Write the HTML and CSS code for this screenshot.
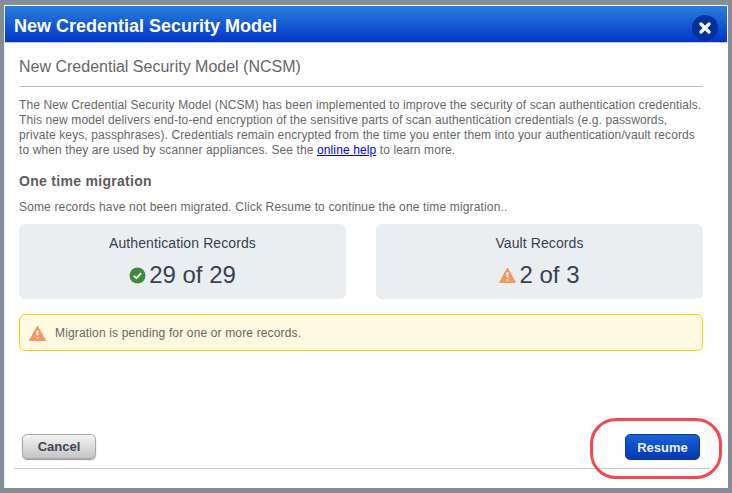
FILE: index.html
```html
<!DOCTYPE html>
<html lang="en">
<head>
<meta charset="utf-8">
<title>New Credential Security Model</title>
<link rel="stylesheet" href="styles.css">
</head>
<body>
<div class="frame">
  <div class="dialog">
    <header class="titlebar">
      <h1 class="title">New Credential Security Model</h1>
      <button class="close" aria-label="Close">
        <svg width="12" height="12" viewBox="0 0 12 12"><path d="M2 2 10 10M10 2 2 10" stroke="#fff" stroke-width="3.2" stroke-linecap="round"/></svg>
      </button>
    </header>
    <main class="content">
      <h2 class="subtitle">New Credential Security Model (NCSM)</h2>
      <p class="intro">The New Credential Security Model (NCSM) has been implemented to improve the security of scan authentication credentials.<br>This new model delivers end-to-end encryption of the sensitive parts of scan authentication credentials (e.g. passwords,<br>private keys, passphrases). Credentials remain encrypted from the time you enter them into your authentication/vault records<br>to when they are used by scanner appliances. See the <a href="#" class="link">online help</a> to learn more.</p>
      <h3 class="section">One time migration</h3>
      <p class="note">Some records have not been migrated. Click Resume to continue the one time migration..</p>
      <div class="cards">
        <section class="card">
          <div class="card-label">Authentication Records</div>
          <div class="card-value">
            <svg class="ic" width="17" height="17" viewBox="0 0 17 17"><circle cx="8.5" cy="8.5" r="8" fill="#3f8a3f"/><path d="M4.8 8.8 7.3 11.2 12.2 6.2" fill="none" stroke="#fff" stroke-width="1.8"/></svg>
            <span>29 of 29</span>
          </div>
        </section>
        <section class="card">
          <div class="card-label">Vault Records</div>
          <div class="card-value">
            <svg class="ic" width="17" height="16" viewBox="0 0 17 16"><path d="M8.5 1 16.5 15.5H.5Z" fill="#f09a62" stroke="#f09a62" stroke-linejoin="round"/><path d="M8.5 5.5V10.5M8.5 12V13.6" stroke="#fff" stroke-width="1.8"/></svg>
            <span>2 of 3</span>
          </div>
        </section>
      </div>
      <div class="alert">
        <svg class="alert-ic" width="17" height="16" viewBox="0 0 17 16"><path d="M8.5 1 16.5 15.5H.5Z" fill="#f09a62" stroke="#f09a62" stroke-linejoin="round"/><path d="M8.5 5.5V10.5M8.5 12V13.6" stroke="#fff" stroke-width="1.8"/></svg>
        <span>Migration is pending for one or more records.</span>
      </div>
    </main>
    <footer class="footer">
      <button class="btn btn-cancel">Cancel</button>
      <button class="btn btn-resume">Resume</button>
    </footer>
  </div>
  <div class="callout"></div>
</div>
</body>
</html>
```

FILE: styles.css
```css
* { box-sizing: border-box; }
html, body { margin: 0; padding: 0; }
body { width: 732px; height: 493px; overflow: hidden; font-family: "Liberation Sans", Arial, sans-serif; background: #fff; }
.frame { position: relative; width: 732px; height: 493px; padding: 5px 4px 5px 4px; background: #858d97; }
.dialog { display: flex; flex-direction: column; height: 100%; background: #fff; border: 1px solid #fff; border-bottom: 0; border-left: 1px solid #e6eef8; }
.titlebar { display: flex; align-items: center; justify-content: space-between; flex: none; height: 37px; padding: 3px 9px 0 9px; background: linear-gradient(#2a7fde, #0036c6); border-bottom: 1px solid #c5c8cc; }
.title { margin: 0; font-size: 18px; font-weight: 700; line-height: 22px; color: #fff; }
.close { display: flex; align-items: center; justify-content: center; width: 26px; height: 26px; margin-top: 5px; padding: 0; border: 0; border-radius: 50%; background: #02309f; }
.content { flex: 1; padding: 0 24px 0 14px; color: #666; }
.subtitle { margin: 0; height: 44px; padding-top: 14px; font-size: 16px; font-weight: 400; line-height: 20px; color: #666; border-bottom: 1px solid #bdbdbd; }
.intro { margin: 11px 0 0; font-size: 12px; line-height: 15px; letter-spacing: 0.11px; color: #666; white-space: nowrap; }
.link { color: #00e; text-decoration: underline; }
.section { margin: 15px 0 0; font-size: 14px; font-weight: 700; line-height: 16px; letter-spacing: 0.3px; color: #5c5c5c; }
.note { margin: 11px 0 0; font-size: 12px; line-height: 15px; letter-spacing: 0.15px; color: #666; }
.cards { display: flex; gap: 30px; margin-top: 9px; }
.card { flex: 1; height: 75px; padding-top: 11px; border-radius: 6px; background: #ebeef1; text-align: center; color: #37424e; }
.card-label { font-size: 14px; line-height: 17px; letter-spacing: 0.1px; }
.card-value { display: flex; align-items: center; justify-content: center; gap: 3px; margin-top: 9px; font-size: 24px; line-height: 28px; }
.ic { flex: none; }
.alert { display: flex; align-items: center; gap: 9px; height: 37px; margin-top: 15px; padding-left: 9px; border: 1px solid #f2d010; border-radius: 6px; background: #fef9e0; font-size: 12px; letter-spacing: 0.15px; color: #666; }
.alert-ic { flex: none; }
.footer { position: relative; display: flex; align-items: flex-start; justify-content: space-between; flex: none; height: 55px; margin: 0 18px 0 9px; padding: 1px 9px 0 8px; }
.footer::after { content: ""; position: absolute; left: 0; right: 0; top: 35px; height: 1px; background: #c4c4c4; }
.btn { padding: 0; border-radius: 5px; font-family: inherit; font-size: 13px; font-weight: 700; }
.btn-cancel { width: 74px; height: 25px; border: 1px solid #a9a9a9; background: linear-gradient(#f4f4f4, #c4c4c4); color: #3d4654; box-shadow: 0 1px 1px #999; }
.btn-resume { width: 75px; height: 26px; border: 1px solid #0b3a94; background: linear-gradient(#1a63d6, #0336b4); color: #e8f1fb; }
.callout { position: absolute; left: 590px; top: 418px; width: 132px; height: 61px; border: 3px solid #f4484f; border-radius: 26px; }
```
